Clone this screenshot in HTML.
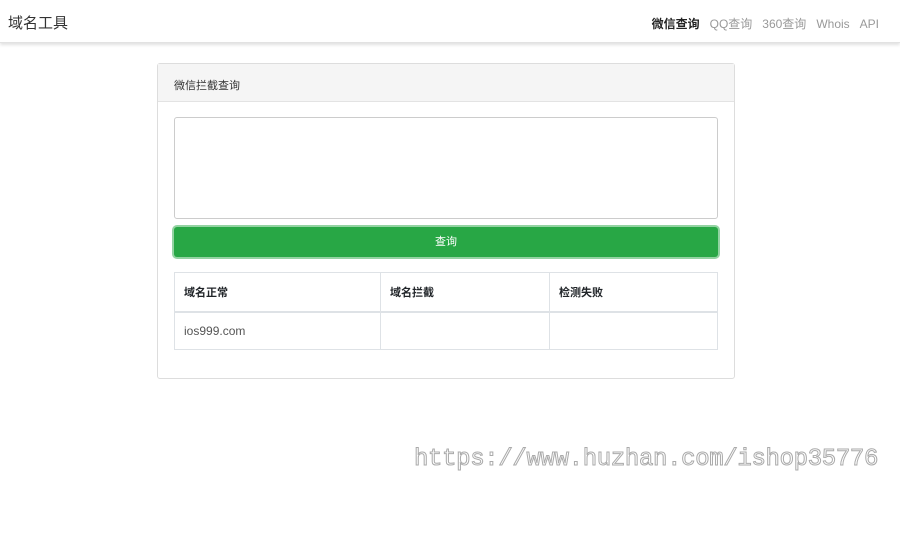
<!DOCTYPE html>
<html><head><meta charset="utf-8"><style>
*{box-sizing:border-box;margin:0;padding:0}
body{width:900px;height:539px;background:#fff;font-family:"Liberation Sans","Noto Sans CJK SC",sans-serif;position:relative;overflow:hidden;color:#212529}
.nav{position:absolute;left:0;top:0;width:900px;height:43px;background:#fff;box-shadow:0 2px 3px rgba(0,0,0,.12);border-bottom:1px solid #e2e2e2}
.brand{position:absolute;left:8px;top:12px;font-size:15px;color:#333}
.links{position:absolute;right:21px;top:15px;font-size:12px;color:#999}
.links span{margin-left:10px}
.links b{color:#222}
.card{position:absolute;left:157px;top:63px;width:578px;height:316px;border:1px solid #ddd;border-radius:3px}
.ch{height:38px;background:#f5f5f5;border-bottom:1px solid #e3e3e3;font-size:11px;padding:13px 0 0 16px;color:#333}
.ta{position:absolute;left:16px;top:53px;width:544px;height:102px;border:1px solid #ccc;border-radius:3px}
.btn{position:absolute;left:16px;top:163px;width:544px;height:30px;background:#28a745;border-radius:3px;box-shadow:0 0 0 2px rgba(40,167,69,.5);color:#fff;font-size:11px;text-align:center;line-height:30px}
table{position:absolute;left:16px;top:208px;width:544px;border-collapse:collapse;font-size:11px}
td,th{border:1px solid #dee2e6;text-align:left;padding:0 9px}
th{height:39px;border-bottom:2px solid #dee2e6;font-weight:bold}
td{height:38px;color:#555;font-size:12px}
.wm{position:absolute;left:414px;top:446px;font-family:"Liberation Mono",monospace;font-size:24px;color:#fff;-webkit-text-stroke:1px #aaa;letter-spacing:-0.34px;white-space:nowrap}
</style></head><body>
<div class="nav"><div class="brand">域名工具</div>
<div class="links"><b>微信查询</b><span>QQ查询</span><span>360查询</span><span>Whois</span><span>API</span></div></div>
<div class="card"><div class="ch">微信拦截查询</div>
<div class="ta"></div>
<div class="btn">查询</div>
<table><tr><th style="width:206px">域名正常</th><th style="width:169px">域名拦截</th><th>检测失败</th></tr>
<tr><td>ios999.com</td><td></td><td></td></tr></table>
</div>
<div class="wm">https://www.huzhan.com/ishop35776</div>
</body></html>
